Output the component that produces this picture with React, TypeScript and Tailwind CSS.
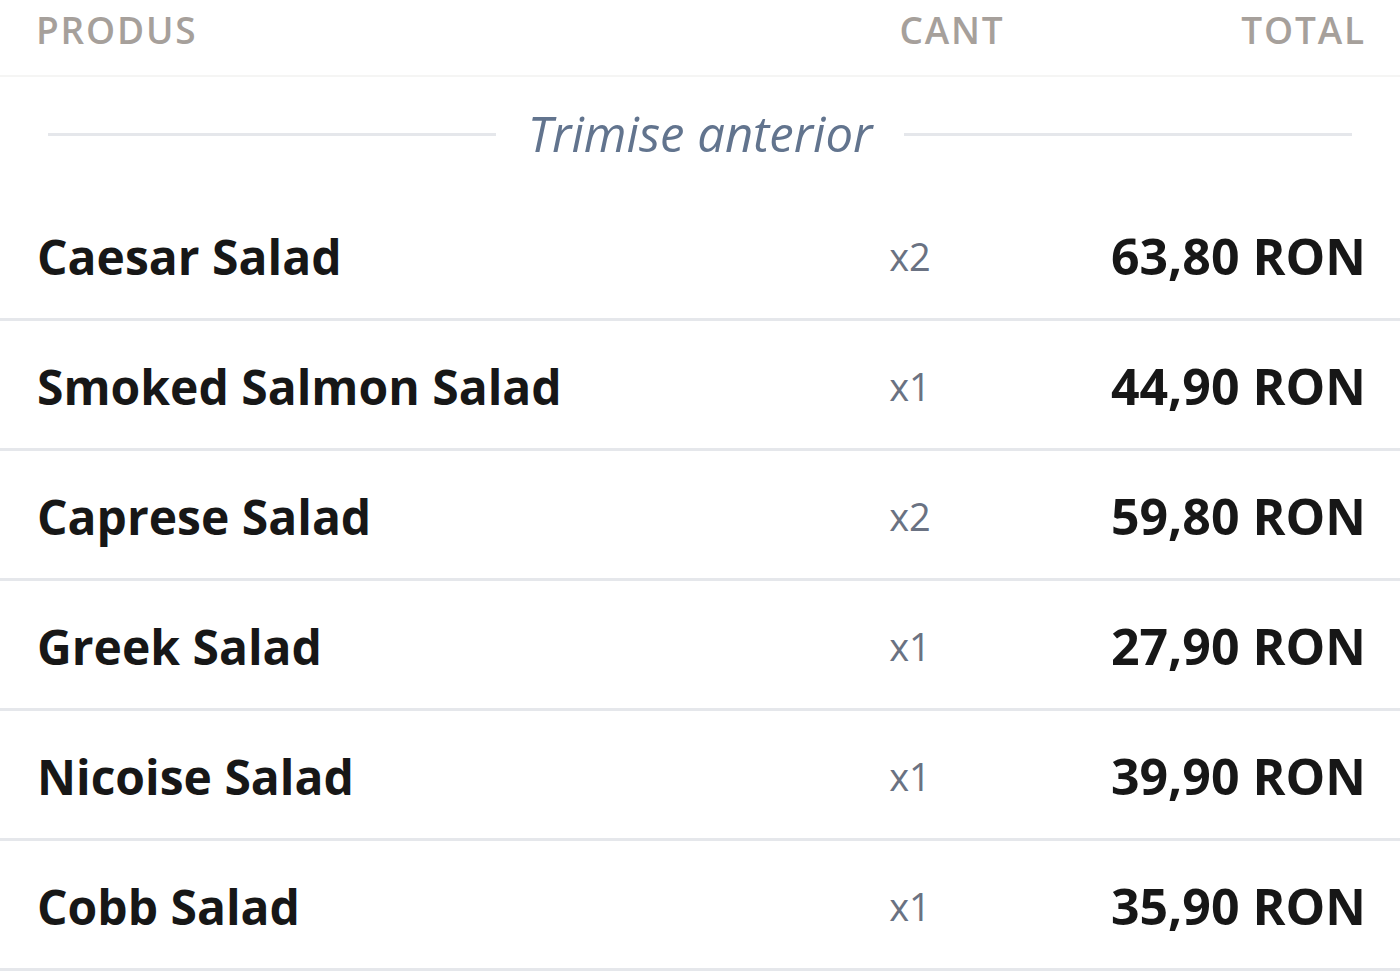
import React from 'react';

const items = [
  { name: 'Caesar Salad', qty: 2, total: '63,80 RON' },
  { name: 'Smoked Salmon Salad', qty: 1, total: '44,90 RON' },
  { name: 'Caprese Salad', qty: 2, total: '59,80 RON' },
  { name: 'Greek Salad', qty: 1, total: '27,90 RON' },
  { name: 'Nicoise Salad', qty: 1, total: '39,90 RON' },
  { name: 'Cobb Salad', qty: 1, total: '35,90 RON' },
];

export default function App() {
  return (
    <div className="min-h-screen bg-white font-['Open_Sans',sans-serif]">
      {/* header */}
      <div className="grid h-[77px] grid-cols-[1fr_120px_354px] items-center border-b-2 border-stone-100 pb-4 pl-[36px] pr-[34px] text-[37px] font-semibold uppercase tracking-wider text-stone-400">
        <div>Produs</div>
        <div className="text-center">Cant</div>
        <div className="text-right">Total</div>
      </div>

      {/* section divider */}
      <div className="flex h-[114px] items-center gap-8 px-[48px]">
        <div className="h-[3px] flex-1 bg-gray-200" />
        <span className="text-[49px] italic text-slate-500">Trimise anterior</span>
        <div className="h-[3px] flex-1 bg-gray-200" />
      </div>

      {/* rows */}
      {items.map((item) => (
        <div
          key={item.name}
          className="grid h-[130px] grid-cols-[1fr_120px_396px] items-center border-b-[3px] border-gray-200 pl-[37px] pr-[34px] pt-1"
        >
          <div className="text-[48px] font-bold text-neutral-900">{item.name}</div>
          <div className="text-center text-[38px] font-medium text-gray-500">x{item.qty}</div>
          <div className="text-right text-[50px] font-bold text-neutral-900">{item.total}</div>
        </div>
      ))}
    </div>
  );
}
